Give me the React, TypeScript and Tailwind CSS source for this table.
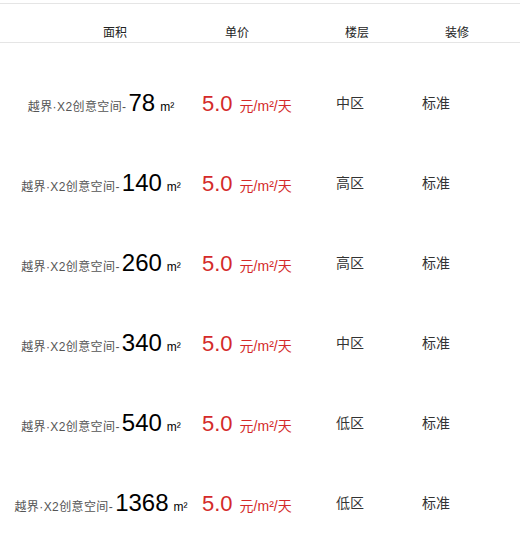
import React from 'react';

const rows = [
  { area: '78', floor: '中区' },
  { area: '140', floor: '高区' },
  { area: '260', floor: '高区' },
  { area: '340', floor: '中区' },
  { area: '540', floor: '低区' },
  { area: '1368', floor: '低区' },
];

export default function App() {
  return (
    <div className="w-[520px] bg-white pt-[3px] font-['Liberation_Sans','Noto_Sans_CJK_SC',sans-serif] text-[#333]">
      {/* header */}
      <div className="flex border-y border-[#e5e5e5] pl-[103px] pt-[21px] pb-px text-[12px] leading-[16px] text-[#222]">
        <div className="w-[122px]">面积</div>
        <div className="w-[120px]">单价</div>
        <div className="w-[100px]">楼层</div>
        <div>装修</div>
      </div>

      {/* list */}
      <div className="mt-[20px]">
        {rows.map((r, i) => (
          <div key={i} className="flex h-[80px] items-center">
            <div className="w-[202px] text-center whitespace-nowrap">
              <span className="text-[12px] tracking-[0.4px] text-[#555]">越界·X2创意空间-</span>
              <span className="ml-[2px] text-[24px] text-black">{r.area}</span>
              <span className="ml-[5px] text-[12px] text-black">m²</span>
            </div>
            <div className="w-[134px] whitespace-nowrap text-[#d42a2a]">
              <span className="text-[22px]">5.0</span>
              <span className="ml-[7px] text-[14px]">元/m²/天</span>
            </div>
            <div className="w-[86px] text-[14px]">{r.floor}</div>
            <div className="text-[14px]">标准</div>
          </div>
        ))}
      </div>
    </div>
  );
}
